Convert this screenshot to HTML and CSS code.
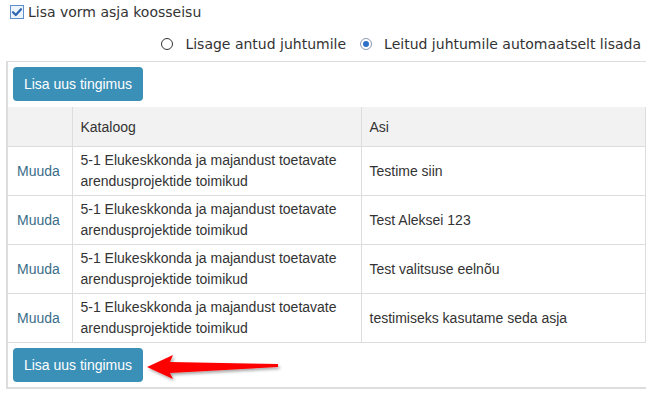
FILE: index.html
```html
<!DOCTYPE html>
<html lang="et">
<head>
<meta charset="utf-8">
<title>Tingimused</title>
<link rel="stylesheet" href="styles.css">
</head>
<body>
<div class="page">
  <label class="check-row">
    <span class="checkbox">
      <svg width="12" height="12" viewBox="0 0 12 12"><path d="M2 6.2 L4.8 9 L10 3.2" fill="none" stroke="#2f64b0" stroke-width="2.2" stroke-linecap="round" stroke-linejoin="round"/></svg>
    </span>
    <span>Lisa vorm asja koosseisu</span>
  </label>
  <div class="radio-row">
    <label class="radio"><span class="circle"></span><span>Lisage antud juhtumile</span></label>
    <label class="radio checked"><span class="circle"></span><span>Leitud juhtumile automaatselt lisada</span></label>
  </div>
  <div class="panel">
    <button class="btn">Lisa uus tingimus</button>
    <table class="grid">
      <colgroup><col class="c1"><col class="c2"><col class="c3"></colgroup>
      <thead>
        <tr><th></th><th>Kataloog</th><th>Asi</th></tr>
      </thead>
      <tbody>
        <tr><td class="link">Muuda</td><td>5-1 Elukeskkonda ja majandust toetavate arendusprojektide toimikud</td><td>Testime siin</td></tr>
        <tr><td class="link">Muuda</td><td>5-1 Elukeskkonda ja majandust toetavate arendusprojektide toimikud</td><td>Test Aleksei 123</td></tr>
        <tr><td class="link">Muuda</td><td>5-1 Elukeskkonda ja majandust toetavate arendusprojektide toimikud</td><td>Test valitsuse eelnõu</td></tr>
        <tr><td class="link">Muuda</td><td>5-1 Elukeskkonda ja majandust toetavate arendusprojektide toimikud</td><td>testimiseks kasutame seda asja</td></tr>
      </tbody>
    </table>
    <div class="bottom-row">
      <button class="btn">Lisa uus tingimus</button>
      <svg class="arrow" width="140" height="34" viewBox="0 0 140 34">
        <defs>
          <filter id="sh" x="-10%" y="-40%" width="130%" height="200%">
            <feDropShadow dx="1.5" dy="2" stdDeviation="1.5" flood-color="#000" flood-opacity="0.35"/>
          </filter>
        </defs>
        <polygon filter="url(#sh)" fill="#f00" points="2,19 28,7 25,14 133,16 133,19 25,25 28,31"/>
      </svg>
    </div>
  </div>
</div>
</body>
</html>
```

FILE: styles.css
```css
html, body {
  margin: 0;
  padding: 0;
  background: #fff;
  overflow: hidden;
}

.page {
  width: 646px;
  height: 399px;
  overflow: hidden;
  color: #333;
}

.check-row {
  display: flex;
  align-items: center;
  height: 20px;
  margin-top: 2px;
  padding-left: 10px;
  font-family: "DejaVu Sans", Verdana, sans-serif;
  font-size: 14px;
  gap: 4px;
}

.checkbox {
  width: 12px;
  height: 12px;
  border: 1px solid #5f8fcf;
  background: #eef4fc;
  display: flex;
  align-items: center;
  justify-content: center;
}

.checkbox svg { display: block; }

.radio-row {
  display: flex;
  justify-content: flex-end;
  align-items: center;
  height: 20px;
  margin-top: 12px;
  padding-right: 5px;
  gap: 14px;
  font-family: "DejaVu Sans", Verdana, sans-serif;
  font-size: 14px;
}

.radio {
  display: flex;
  align-items: center;
  gap: 12px;
}

.circle {
  width: 10px;
  height: 10px;
  border: 1px solid #333;
  border-radius: 50%;
  box-sizing: content-box;
  position: relative;
  background: #fff;
}

.radio.checked .circle {
  border-color: #8a9bb0;
}

.radio.checked .circle::after {
  content: "";
  position: absolute;
  left: 2px;
  top: 2px;
  width: 6px;
  height: 6px;
  border-radius: 50%;
  background: #2f6fc8;
}

.panel {
  margin-top: 7px;
  margin-left: 6px;
  width: 720px;
  border-top: 1px solid #ddd;
  border-left: 2px solid #ddd;
  border-bottom: 2px solid #ddd;
  padding: 0;
}

.btn {
  display: block;
  margin: 5px 0 0 5px;
  height: 34px;
  width: 130px;
  padding: 0;
  border: none;
  border-radius: 4px;
  background: #3b90b7;
  color: #fff;
  font-family: "Liberation Sans", Arial, sans-serif;
  font-size: 14px;
}

.grid {
  margin-top: 6px;
  width: 637px;
  border-collapse: collapse;
  table-layout: fixed;
  font-family: "Liberation Sans", Arial, sans-serif;
  font-size: 14px;
  color: #333;
}

.c1 { width: 64px; }
.c2 { width: 289px; }
.c3 { width: 284px; }

.grid th {
  background: #f2f2f2;
  font-weight: normal;
  text-align: left;
  height: 39px;
  padding: 0 8px;
  border: 1px solid #ddd;
  border-left: none;
}

.grid td {
  border: 1px solid #ddd;
  border-left: none;
  padding: 3px 8px;
  line-height: 21px;
  height: 42px;
  vertical-align: middle;
}

.grid th:first-child, .grid td:first-child {
  border-left: none;
}

.grid thead tr th { border-top: none; }

.grid td.link {
  color: #3a6d8a;
  padding-left: 9px;
}

.bottom-row {
  display: flex;
  align-items: center;
  margin-bottom: 5px;
}

.bottom-row .btn {
  margin-top: 5px;
}

.arrow {
  display: block;
  margin-left: 2px;
  margin-top: 5px;
}
```
